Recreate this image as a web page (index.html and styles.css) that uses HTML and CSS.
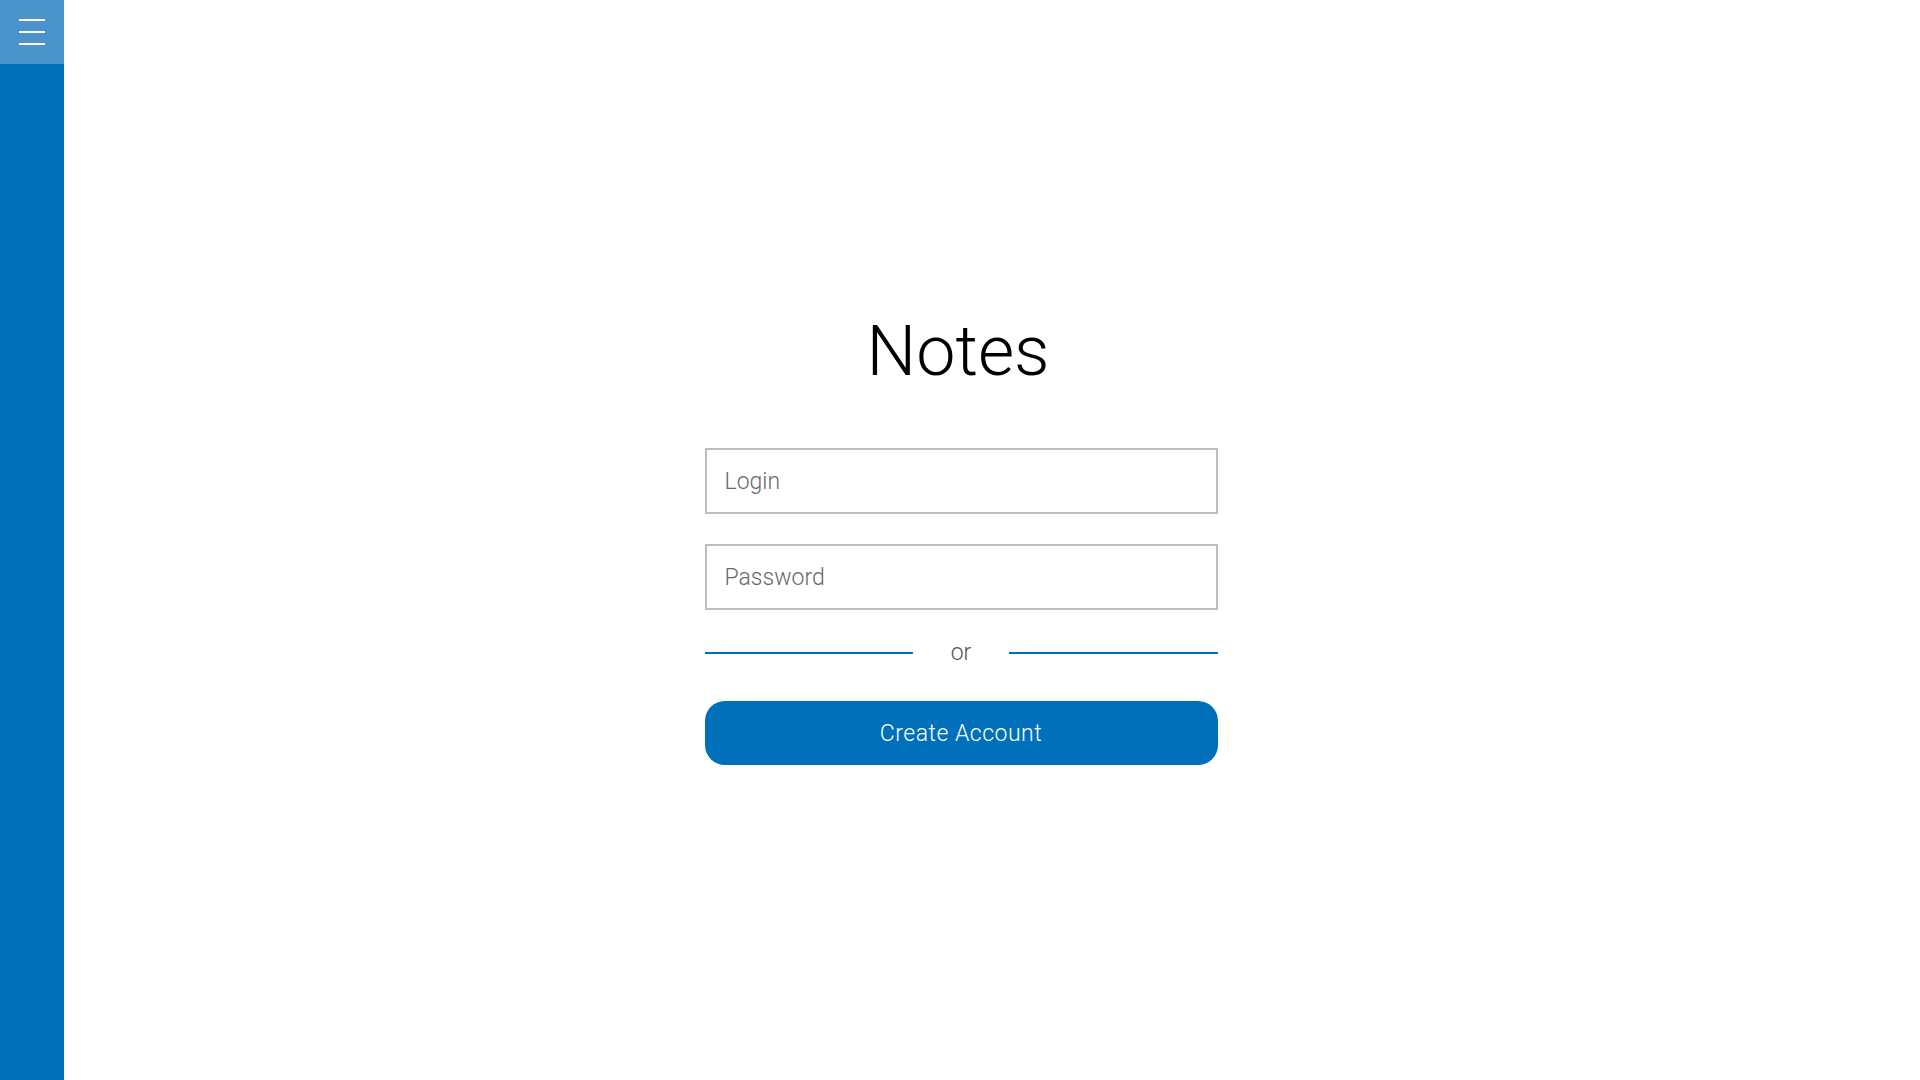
FILE: index.html
```html
<!DOCTYPE html>
<html lang="en">
<head>
<meta charset="utf-8">
<title>Notes</title>
<link rel="stylesheet" href="styles.css">
</head>
<body>
<aside class="sidebar">
  <button class="menu-btn" aria-label="Menu">
    <span class="bar"></span>
    <span class="bar"></span>
    <span class="bar"></span>
  </button>
</aside>
<main class="main">
  <h1 class="title">Notes</h1>
  <form class="form">
    <input class="field" type="text" placeholder="Login">
    <input class="field" type="password" placeholder="Password">
    <div class="divider">
      <span class="line"></span>
      <span class="or">or</span>
      <span class="line"></span>
    </div>
    <button type="button" class="create-btn">Create Account</button>
  </form>
</main>
</body>
</html>
```
FILE: styles.css
```css
* { box-sizing: border-box; }
html, body { margin: 0; padding: 0; height: 100%; }
body {
  font-family: Roboto, "Liberation Sans", sans-serif;
  background: #ffffff;
  color: #000;
}
.sidebar {
  position: fixed;
  left: 0;
  top: 0;
  width: 64px;
  height: 100%;
  background: #0070bb;
}
.menu-btn {
  width: 64px;
  height: 64px;
  border: 0;
  padding: 0;
  margin: 0;
  background: #4a94c9;
  display: flex;
  flex-direction: column;
  align-items: center;
  justify-content: center;
  gap: 10px;
}
.bar {
  display: block;
  width: 26px;
  height: 2px;
  background: #ffffff;
}
.main {
  display: flex;
  flex-direction: column;
  align-items: center;
  padding-top: 316px;
  padding-left: 2px;
}
.title {
  margin: 0;
  font-size: 70px;
  line-height: 70px;
  font-weight: 300;
  color: #000;
  letter-spacing: 0;
  margin-right: 6px;
}
.form {
  width: 513px;
  margin-top: 62px;
  display: flex;
  flex-direction: column;
}
.field {
  height: 66px;
  border: 2px solid #bdbdbd;
  padding: 0 18px;
  font-family: Roboto, "Liberation Sans", sans-serif;
  font-size: 23px;
  font-weight: 300;
  color: #333;
  outline: none;
}
.field::placeholder { color: #6a6a6a; }
.field + .field { margin-top: 30px; }
.divider {
  margin-top: 28px;
  height: 30px;
  display: flex;
  align-items: center;
}
.line {
  flex: 1;
  height: 2px;
  background: #0070bb;
}
.or {
  width: 96px;
  text-align: center;
  font-size: 23px;
  font-weight: 300;
  color: #555;
  line-height: 30px;
}
.create-btn {
  margin-top: 33px;
  height: 64px;
  border: 0;
  border-radius: 20px;
  background: #0070bb;
  color: #ffffff;
  font-family: Roboto, "Liberation Sans", sans-serif;
  font-size: 23px;
  font-weight: 300;
  letter-spacing: 0.5px;
}
```
